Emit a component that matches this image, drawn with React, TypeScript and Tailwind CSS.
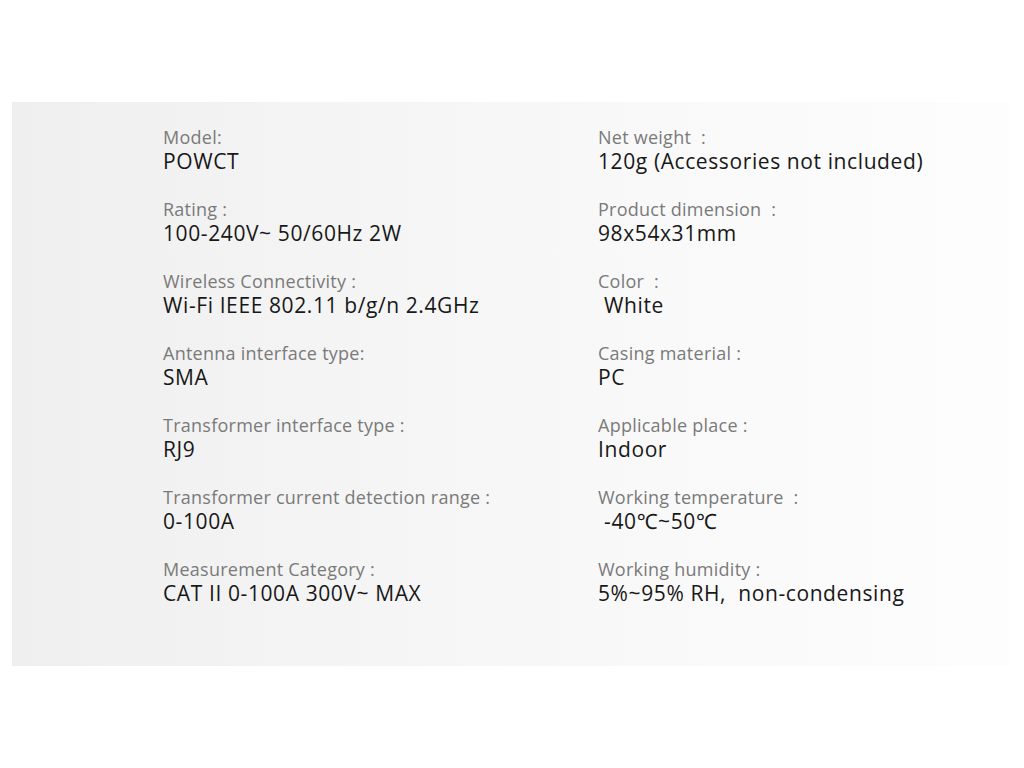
import React from 'react';

const leftSpecs = [
  { label: 'Model:', value: 'POWCT' },
  { label: 'Rating :', value: '100-240V~ 50/60Hz 2W' },
  { label: 'Wireless Connectivity :', value: 'Wi-Fi IEEE 802.11 b/g/n 2.4GHz' },
  { label: 'Antenna interface type:', value: 'SMA' },
  { label: 'Transformer interface type :', value: 'RJ9' },
  { label: 'Transformer current detection range :', value: '0-100A' },
  { label: 'Measurement Category :', value: 'CAT II 0-100A 300V~ MAX' },
];

const rightSpecs = [
  { label: 'Net weight  :', value: '120g (Accessories not included)' },
  { label: 'Product dimension  :', value: '98x54x31mm' },
  { label: 'Color  :', value: '\u00a0White' },
  { label: 'Casing material :', value: 'PC' },
  { label: 'Applicable place :', value: 'Indoor' },
  { label: 'Working temperature  :', value: '\u00a0-40℃~50℃' },
  { label: 'Working humidity :', value: '5%~95% RH,  non-condensing' },
];

const SpecItem = ({ label, value }: { label: string; value: string }) => (
  <div className="flex flex-col">
    <span className="text-[18px] leading-[23px] tracking-[0.25px] text-[#7a7a7a] whitespace-pre">{label}</span>
    <span className="text-[21px] leading-[25px] tracking-[0.6px] text-[#181818] whitespace-pre">{value}</span>
  </div>
);

export default function App() {
  return (
    <div className="w-[1024px] h-[768px] bg-white pt-[102px] pl-[12px]" style={{ fontFamily: '"Open Sans", "Noto Sans", "Noto Sans CJK SC", sans-serif' }}>
      <div className="w-[998px] h-[564px] bg-gradient-to-r from-[#efefef] via-[#f7f7f7] to-[#fdfdfd] pt-[24px] pl-[151px] grid grid-cols-[435px_1fr]">
        <div className="flex flex-col gap-[24px]">
          {leftSpecs.map((s, i) => (
            <SpecItem key={i} label={s.label} value={s.value} />
          ))}
        </div>
        <div className="flex flex-col gap-[24px]">
          {rightSpecs.map((s, i) => (
            <SpecItem key={i} label={s.label} value={s.value} />
          ))}
        </div>
      </div>
    </div>
  );
}
